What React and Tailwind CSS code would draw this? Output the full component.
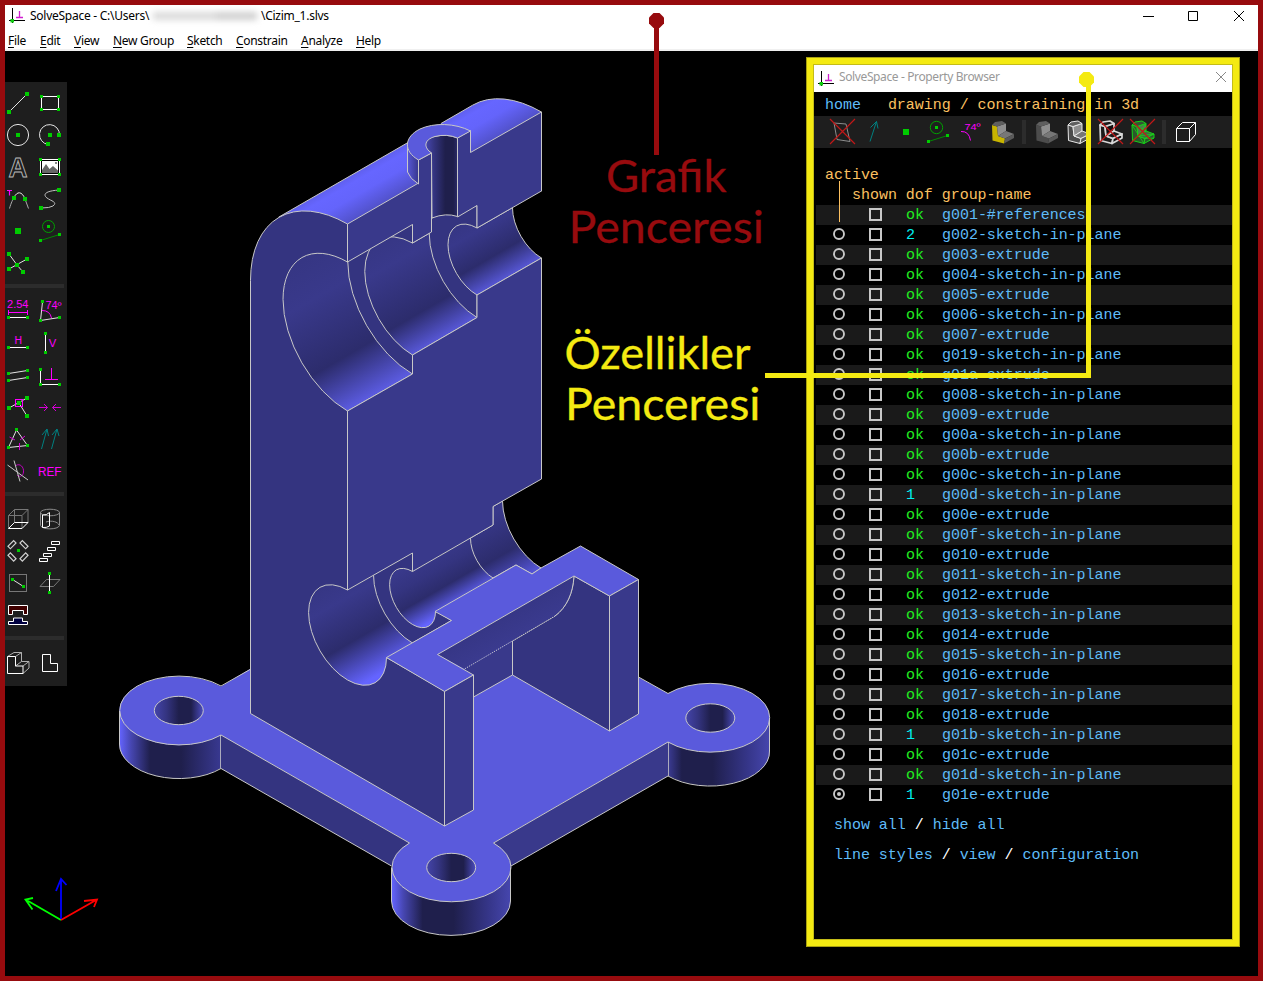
import React from "react";

const GREEN = "#00cc00";
const MAG = "#ff00ff";
const DIM = "#8c8c8c";

/* ---------- small drawing helpers ---------- */
function Dot({ x, y, s = 4 }) {
  return <rect x={Math.round(x - s / 2)} y={Math.round(y - s / 2)} width={s} height={s} fill={GREEN} stroke="none" />;
}
function Dots({ at, s = 3 }) {
  return at.map(([x, y]) => <Dot key={`${x}-${y}`} x={x} y={y} s={s} />);
}
function Icon({ children }) {
  return (
    <svg viewBox="0 0 32 32" className="block h-8 w-8" fill="none" stroke="#e4e4e4" strokeWidth="1">
      {children}
    </svg>
  );
}
function Label({ x, y, size, w, color = MAG, children }) {
  return (
    <text x={x} y={y} fontSize={size} fill={color} stroke="none" textLength={w} lengthAdjust="spacingAndGlyphs" fontFamily="'Liberation Sans', sans-serif">
      {children}
    </text>
  );
}

const sketchIcons = [
  <><path d="M7 25L25 7" /><Dots s={4} at={[[7, 25], [25, 7]]} /></>,
  <><path d="M7.500 9.500h17v13h-17z" stroke="#fff" /><Dots at={[[7.5, 9.5], [24.5, 9.5], [7.5, 22.5], [24.5, 22.5]]} /></>,
  <><circle cx="16" cy="16" r="10.600" /><Dot x={16} y={16} /></>,
  <><path d="M25.500 16A10 10 0 1 0 14 25.500" /><Dots s={4} at={[[16, 16], [25, 16], [14, 25]]} /></>,
  <text x="6.500" y="25.500" fontSize="27" fontWeight="bold" fontFamily="'Liberation Sans', sans-serif" stroke="#b8b8b8" strokeWidth=".9" textLength="19" lengthAdjust="spacingAndGlyphs">A</text>,
  <>
    <rect x="6.500" y="8.500" width="19" height="15" fill="#000" stroke="#fff" />
    <rect x="8" y="10" width="16" height="12" fill="#fff" stroke="none" />
    <path d="M8 22V19L12 13L15.500 18L19 15L24 19.500V22z" fill="#666" stroke="none" />
    <rect x="21" y="11" width="2" height="2" fill="#888" stroke="none" />
    <Dots at={[[6.5, 8.5], [25.5, 8.5], [6.5, 23.5], [25.5, 23.5]]} />
  </>,
  <><path d="M7.500 25.500C9 20 11 16 12 14.500" stroke="#aaa" /><path d="M12 14.500C15 8 20 8 23 16" /><path d="M23 16L26.500 25.500" stroke="#aaa" /><path d="M5 7.500h5M7.500 7.500v5" stroke={MAG} strokeWidth="1.200" /><Dots s={4} at={[[12, 15], [23, 16]]} /></>,
  <><path d="M25 7C10 8 9 12 13 15S24 19 19 23Q16 25 7 25" stroke="#c0c0c0" /><Dots s={4} at={[[25, 7], [7, 25]]} /></>,
  <Dot x={16} y={16} s={6} />,
  <><circle cx="14.500" cy="11.500" r="6" stroke="#00a000" /><path d="M6.500 25.500L25.500 19.500" stroke="#008800" /><Dots at={[[14.5, 11.5], [6.5, 25.5], [25.5, 19.5]]} /></>,
  <><path d="M7 7L15 18L21 25M7 22L25 12" /><Dots s={4} at={[[7, 7], [25, 12], [7, 22], [21, 25], [15, 18]]} /></>,
  null,
];

const constrainIcons = [
  <><Label x="5" y="12.800" size="10" w="21.500">2.54</Label><path d="M6.500 15v5M25.500 15v5M6.500 17.500h19" stroke={MAG} /><path d="M6 22.500h20" stroke="#fff" /><Dots at={[[6.5, 22.5], [25.5, 22.5]]} /></>,
  <><path d="M8.500 7L6.500 25.500L25.500 22.500" /><path d="M8 15.500Q16 15.500 17.500 23" stroke={MAG} /><Label x="11.500" y="13.800" size="10" w="16">74º</Label><Dots at={[[8.5, 6.5], [6.5, 25.5], [25.5, 22.5]]} /></>,
  <><Label x="12.500" y="16.500" size="10" w="7.500">H</Label><path d="M6 20.500h20" stroke="#fff" /><Dots at={[[6.5, 20.5], [25.5, 20.5]]} /></>,
  <><path d="M11.500 6v20" stroke="#fff" /><Label x="14.800" y="20" size="10.500" w="7.500">V</Label><Dots at={[[11.5, 6.5], [11.5, 25.5]]} /></>,
  <><path d="M6.500 14.500L25.500 11.500M6.500 21.500L25.500 18.500" /><Dots at={[[6.5, 14.5], [25.5, 11.5], [6.5, 21.5], [25.5, 18.5]]} /></>,
  <><path d="M6.500 10V25.500H25.500" stroke="#fff" /><path d="M17.500 9v11M11 20.500h13" stroke={MAG} /><Dots at={[[6.5, 10.5], [6.5, 25.5], [25.5, 25.5]]} /></>,
  <><path d="M7 17L25 7M17 12L25 25" /><Dots s={4} at={[[7, 17], [25, 7], [25, 25], [17, 12]]} /><rect x="13.500" y="8.500" width="7" height="7" stroke={MAG} /></>,
  <path d="M5 16.500h8.500M10 13l3.500 3.500L10 20M27 16.500h-8.500M22 13l-3.500 3.500L22 20" stroke="#d400d4" />,
  <><path d="M14.500 7L6.500 24.500L25.500 22.500z" /><path d="M7.500 14l5.500 3M23 13l-5 4M17.500 20v7" stroke="#d400d4" /><Dots at={[[14.5, 6.5], [6.5, 24.5], [25.5, 22.5]]} /></>,
  <path d="M7.500 26L13 6M8 12l5-6l1.500 7M17.500 26L23 6M18 12l5-6l2 7" stroke="#008080" />,
  <><path d="M14 10.500C18 8 22 12 21.500 17C21 22 17 22 15 20" stroke="#c000c0" /><path d="M5.500 10L26 25M12 5.500L18 26.500" stroke="#c8c8c8" /></>,
  <Label x="4" y="20.800" size="12.500" w="23.500">REF</Label>,
];

const groupIcons = [
  <><path d="M6.500 12.500h13.500v13M20 12.500l6-6v13M6.500 12.500v13M6.500 12.500l6-6h13.500M12.500 6.500v13" stroke="#777" /><path d="M6.500 25.500H20L26 19.500H12.500z" stroke="#fff" /></>,
  <><ellipse cx="16" cy="9.500" rx="9.500" ry="3.300" stroke={DIM} /><path d="M6.500 9.500v13C8 27 24 27 25.500 22.500V9.500M12 19c6-2 12 0 13 3" stroke={DIM} /><path d="M8.500 12q4 .5 7-2.500V23q-3 2-7 1.500z" stroke="#fff" /></>,
  <>{[[10, 9.7, -45], [22, 9.7, 45], [10, 22, 45], [22, 22, -45]].map(([x, y, r]) => <rect key={`${x}${y}`} x={x - 4} y={y - 1.7} width="8" height="3.400" transform={`rotate(${r} ${x} ${y})`} stroke="#d0d0d0" strokeWidth="1.200" />)}<Dot x={16.5} y={15.5} s={3} /></>,
  <path d="M17.500 6.500h8v3h-8zM13.500 12.500h8v3h-8zM9.500 18.500h8v3h-8zM5.500 23.500h8v3h-8z" stroke="#fff" />,
  <><rect x="7.500" y="7.500" width="17" height="17" stroke="#777" /><path d="M10.500 12.500L21.500 19.500" /><Dots at={[[10.5, 12.5], [21.5, 19.5]]} /></>,
  <><path d="M6 19.500L12.500 12.500H26L19.500 19.500z" stroke="#777" /><path d="M15.500 7v18" stroke="#fff" /><Dots at={[[15.5, 6.5], [15.5, 25.5]]} /></>,
  <><path d="M6.500 6.500h19v9h-4v-4h-11v4h-4z" fill="#400000" stroke="#fff" /><path d="M6.500 25.500v-3h5v-3.500h9v3.500h5v3z" fill="#000040" stroke="#fff" /></>,
  null,
];

const viewIcons = [
  <><path d="M13.500 9.500l6-4H12L5.500 9.500M19.500 5.500V14.500L13.500 19M19.500 14.500H27L21 19M27 14.500V21L21 26.500" stroke="#b0b0b0" /><path d="M5.500 9.500h8v9.500H21v7.500H5.500z" stroke="#fff" /></>,
  <path d="M8.500 7.500h8v9h7v8h-15z" stroke="#fff" />,
];

function IconGrid({ icons }) {
  return (
    <div className="-ml-[3px] grid w-16 grid-cols-2">
      {icons.map((ic, i) => <div key={i} className="h-8 w-8">{ic && <Icon>{ic}</Icon>}</div>)}
    </div>
  );
}
function Rule() {
  return <div className="mt-[5px] mb-[7px] h-1 w-[59px] bg-[#2c2c2c]" />;
}

function Toolbar() {
  return (
    <div className="absolute top-[31px] left-0 h-[604px] w-[62px] overflow-hidden bg-[#1e1e1e] pt-[5px]">
      <IconGrid icons={sketchIcons} />
      <Rule />
      <IconGrid icons={constrainIcons} />
      <Rule />
      <IconGrid icons={groupIcons} />
      <Rule />
      <IconGrid icons={viewIcons} />
    </div>
  );
}

/* ---------- the bracket ---------- */
const TOP = "#5a5adc";
const LEFT = "#343480";
const FRONT = "#39398b";

function bandGradient(id, from, to, stops) {
  return (
    <linearGradient id={id} gradientUnits="userSpaceOnUse" x1={from / 2} y1={from * 0.866} x2={to / 2} y2={to * 0.866}>
      {stops.map(([o, c]) => <stop key={o} offset={o} stopColor={c} />)}
    </linearGradient>
  );
}
function acrossGradient(id, x1, x2, stops) {
  return (
    <linearGradient id={id} gradientUnits="userSpaceOnUse" x1={x1} y1="0" x2={x2} y2="0">
      {stops.map(([o, c]) => <stop key={o} offset={o} stopColor={c} />)}
    </linearGradient>
  );
}

const lugs = [
  { id: "lugA", cx: 178.8, cy: 710.5 },
  { id: "lugB", cx: 710.3, cy: 718 },
  { id: "lugC", cx: 451.2, cy: 867.5 },
];

function LugSide({ id, cx, cy }) {
  return <path d={`M${cx - 59.5} ${cy}V${cy + 33.5}A59.500 34.400 0 0 0 ${cx + 59.5} ${cy + 33.5}V${cy}z`} fill={`url(#${id})`} />;
}

function Model() {
  return (
    <svg viewBox="5 51 1253 925" className="absolute inset-0 h-full w-full" fill="none" stroke="#c8c8c8" strokeWidth="1" strokeLinejoin="round">
      <defs>
        {bandGradient("roof", 326, 369, [[0, "#5e5eea"], [0.2, "#6666ff"], [0.5, "#6464fb"], [1, "#5050c6"]])}
        {bandGradient("boreL", 378, 530, [[0, "#363684"], [0.25, "#39398b"], [0.68, "#2c2c6c"], [1, "#5c5ce2"]])}
        {bandGradient("boreM", 395, 514, [[0, "#363684"], [0.25, "#39398b"], [0.72, "#2c2c6c"], [1, "#5858d8"]])}
        {bandGradient("boreS", 425, 495, [[0, "#363684"], [0.2, "#38388a"], [0.62, "#2c2c6c"], [1, "#5858d8"]])}
        {bandGradient("lowL", 669, 779, [[0, "#363684"], [0.2, "#39398b"], [0.57, "#2c2c6c"], [0.95, "#6464ff"]])}
        {bandGradient("lowS", 694, 754, [[0, "#39398b"], [0.3, "#343480"], [0.6, "#2c2c6c"], [1, "#6464ff"]])}
        {bandGradient("under", 752, 815, [[0, "#31317a"], [1, "#3b3b90"]])}
        {acrossGradient("pin", 426, 458, [[0, "#4646ae"], [0.25, "#343480"], [0.6, "#1f1f4c"], [0.85, "#1f1f4c"], [1, "#2c2c6c"]])}
        {acrossGradient("boss", 407, 419, [[0, "#5858d8"], [1, "#36368a"]])}
        {lugs.map(({ id, cx }) => (
          <React.Fragment key={id}>
            {acrossGradient(id, cx - 59.5, cx + 59.5, [[0, "#6464ff"], [0.1, "#4646b0"], [0.26, "#1f1f4c"], [0.52, "#1f1f4c"], [0.82, "#36368a"], [1, "#4646ae"]])}
            {acrossGradient(`${id}h`, cx - 24.5, cx + 24.5, [[0, "#4444aa"], [0.25, "#343480"], [0.5, "#1f1f4c"], [0.75, "#1f1f4c"], [1, "#4c4cc0"]])}
          </React.Fragment>
        ))}
      </defs>

      {/* base plate sides */}
      <g stroke="none">
        {lugs.map((l) => <LugSide key={l.id} {...l} />)}
        <path d="M221 735V768.500L391.500 866H420L409.500 843z" fill={LEFT} />
        <path d="M668 742V776L511 866H483L493.500 843z" fill={FRONT} />
      </g>
      {/* base plate top */}
      <path d="M221 686.500A59.500 34.400 0 1 0 221 735L409.500 843A59.500 34.400 0 1 0 493.500 843L668 742A59.500 34.400 0 1 0 668 693.500L638 677L512 640L250 669z" fill={TOP} stroke="none" />
      <path d="M250 669.500L221 686A59.500 34.400 0 1 0 221 735L409.500 843A59.500 34.400 0 1 0 493.500 843L668 742A59.500 34.400 0 1 0 668 693.500L638.500 677" />
      <path d="M119.500 711V744A59.500 34.400 0 0 0 221 768.500L391.500 866M391.500 867.500V901A59.500 34.400 0 0 0 510.500 901V867.500M511 866L668 776A59.500 34.400 0 0 0 769.500 751V718" />
      <path d="M220.500 735V768.500M668.500 742V776" strokeOpacity=".8" />
      {lugs.map(({ id, cx, cy }) => <ellipse key={id} cx={cx} cy={cy} rx="24.500" ry="14.200" fill={`url(#${id}h)`} />)}

      {/* roof of the large bearing */}
      <path d="M278.600 217.200L472.600 105.200A137.800 79.500 60 0 1 541.500 112L541.500 200L347.500 260z" fill="url(#roof)" stroke="none" />
      <path d="M278.600 217.200L408 142.500M441 123.500L472.600 105.200A137.800 79.500 60 0 1 541.500 112" />

      {/* left wall */}
      <path d="M250.500 713.500V280.300A137.800 79.500 60 0 1 347.500 224V590L386.500 657.500L444.500 691V826z" fill={LEFT} />

      {/* upper bores */}
      <path d="M347.500 262A91.200 52.700 60 0 0 347.500 411L412.500 374V224.500z" fill="url(#boreL)" />
      <path d="M412.500 224.500A91.200 52.700 60 0 0 412.500 374z" fill={LEFT} />
      <path d="M412.500 243A68.600 39.600 60 0 0 412.500 355L477 317.500V205.500z" fill="url(#boreM)" />
      <path d="M477 205.500A68.600 39.600 60 0 0 477 317.500z" fill={LEFT} />
      <path d="M477 228A41 23.700 60 0 0 477 295L541.500 258V191z" fill="url(#boreS)" />
      <path d="M541.500 191A41 23.700 60 0 0 541.500 258H543V191z" fill="#000" stroke="none" />
      <path d="M541.500 191A41 23.700 60 0 0 541.500 258" />

      {/* section faces, upper part */}
      <path d="M347.500 224L418.500 183V160L431.500 153V232L412.500 243V224.500L347.500 262z" fill={FRONT} />
      <path d="M457.500 217V138L470.500 130.500V152.500L541.500 112V191L477 228V205.500z" fill={FRONT} />
      {/* boss */}
      <path d="M407.500 143V172Q410 179 418.500 184V160z" fill="url(#boss)" />
      <path d="M431.500 153C422 147 424 139 434 136.500Q447 133.500 457.500 138V216.500Q446 212.500 432 218z" fill="url(#pin)" />
      <path d="M418.500 160C403 151 404 137 420 129C434 122.500 455 123 470.500 131L457.500 138Q447 133.500 435 136.500C423 140 424 148 431.500 153z" fill={TOP} />

      {/* lower bores */}
      <path d="M493 506L502.500 501C504 530 520 558 541.500 568L532 574L516 565L440 612L460 545z" fill="url(#lowL)" stroke="none" />
      <path d="M347.500 590A55.100 31.800 60 1 0 386.500 657.500L425 636L412.500 553z" fill="url(#lowL)" stroke="none" />
      <path d="M347.500 590A55.100 31.800 60 1 0 386.500 657.500" />
      <path d="M412.500 553A55.100 31.800 60 0 0 412.500 643L451.500 620.500L435.500 611z" fill={LEFT} />
      <path d="M412.500 571.500A32.500 18.700 60 1 0 435.500 611.300L493 577.500V525z" fill="url(#lowS)" stroke="none" />
      <path d="M412.500 571.500A32.500 18.700 60 1 0 435.500 611.300" />
      <path d="M470.500 538A32.500 18.700 60 0 0 493 578L516 565L532 574L541 568A55.100 31.800 60 0 1 502.500 501L493 506.500V525z" fill="url(#lowL)" />

      {/* main section face */}
      <path d="M347.500 411L412.500 374V355L477 317.500V295L541.500 258V479L493 506.500V525L412.500 571.500V553L347.500 590z" fill={FRONT} />

      {/* space under the flange */}
      <path d="M464.500 669L512.500 641V675L473.500 697z" fill={FRONT} stroke="none" />
      <path d="M512.500 675L473.500 697" />
      <path d="M574 576L609.500 596V731L512.500 675V641L555 616C567 607 573 593 574 576z" fill={LEFT} />
      <path d="M437.500 654.500L574 576C573 593 567 607 555 616L464.500 669z" fill="url(#under)" stroke="none" />
      <path d="M574 576C573 593 567 607 555 616" />
      <path d="M555 616L464.500 669" strokeDasharray="1.200 1.200" />

      {/* flange */}
      <path d="M386.500 657.500L444.500 691.500L473.500 675L437.500 654.500L574 576L609.500 596L638.500 579.500L580.500 546L541 568L532 574L516 565L435 611.500L451.500 620.500z" fill={TOP} />
      <path d="M444.500 691.500L473.500 675V810L444.500 826z" fill={FRONT} />
      <path d="M609.500 596L638.500 579.500V714L609.500 731z" fill={FRONT} />

      {/* axes */}
      <g strokeWidth="1.800" strokeLinejoin="miter">
        <path d="M61 920L25.500 899.500M33 898L25.500 899.500L32.500 909.500" stroke="#00ff00" />
        <path d="M61 920L97 899.500M84 901L97 899.500L94 907" stroke="#ff0000" />
        <path d="M61 919V879M56 891L61 879L66.500 885" stroke="#0000ff" />
      </g>
    </svg>
  );
}

/* ---------- property browser ---------- */
function SolidL({ edge = "none", tone = ["#4c4c4c", "#8f8f8f", "#5f5f5f", "#777", "#5a5a5a"], w = 1 }) {
  return (
    <g stroke={edge} strokeWidth={w} strokeLinejoin="round">
      <path d="M6 9L11 10.500L12 20L19 22.500L18 27.500L6.500 24.500z" fill={tone[0]} />
      <path d="M11 10.500L20 7.500V15L12 20z" fill={tone[1]} />
      <path d="M6 9L9 6L16 5L20 7.500L11 10.500z" fill={tone[2]} />
      <path d="M12 20L20 15L28 18L19 22.500z" fill={tone[3]} />
      <path d="M19 22.500L28 18V22L18 27.500z" fill={tone[4]} />
    </g>
  );
}
const Cross = () => <path d="M4 3L29 28M29 3L4 28" stroke="#c01818" strokeWidth="1.200" />;

const showIcons = [
  <><path d="M8 7L20 8L24 25.500L11 23.500z" stroke={DIM} /><Cross /></>,
  <path d="M12 25.500L18.500 5.500M12.500 11.500l6-6l1.500 7" stroke="#008080" />,
  <Dot x={16} y={16} s={6} />,
  <><circle cx="14.500" cy="11.500" r="6.200" stroke="#00a000" /><path d="M6.500 25.500L25.500 19.500" stroke="#008800" /><Dots at={[[14.5, 11.5], [6.5, 25.5], [25.5, 19.5]]} /></>,
  <><Label x="10.500" y="14" size="9.500" w="16">74º</Label><path d="M7 15.500Q15 15 16.500 24.500" stroke={MAG} /></>,
  <SolidL tone={["#c8b400", "#8f8f8f", "#5f5f5f", "#777", "#5a5a5a"]} />,
];
const shadeIcons = [
  <SolidL />,
  <SolidL edge="#e8e8e8" />,
  <><SolidL edge="#d8d8d8" w={1.7} tone={["#1c1c1c", "#111", "#1c1c1c", "#1c1c1c", "#111"]} /><Cross /></>,
  <><SolidL edge="#18d018" tone={["#2a5a2a", "#4c7c4c", "#335533", "#3f6f3f", "#2a5a2a"]} /><path d="M6 9L18 27.500M12 20L6.500 24.500M11 10.500L20 15M12 20L28 18M19 22.500L28 22M12 20L20 7.500" stroke="#18d018" strokeWidth=".8" /><Cross /></>,
];

const groups = [
  ["ok", "g001-#references"], ["2", "g002-sketch-in-plane"], ["ok", "g003-extrude"], ["ok", "g004-sketch-in-plane"],
  ["ok", "g005-extrude"], ["ok", "g006-sketch-in-plane"], ["ok", "g007-extrude"], ["ok", "g019-sketch-in-plane"],
  ["ok", "g01a-extrude"], ["ok", "g008-sketch-in-plane"], ["ok", "g009-extrude"], ["ok", "g00a-sketch-in-plane"],
  ["ok", "g00b-extrude"], ["ok", "g00c-sketch-in-plane"], ["1", "g00d-sketch-in-plane"], ["ok", "g00e-extrude"],
  ["ok", "g00f-sketch-in-plane"], ["ok", "g010-extrude"], ["ok", "g011-sketch-in-plane"], ["ok", "g012-extrude"],
  ["ok", "g013-sketch-in-plane"], ["ok", "g014-extrude"], ["ok", "g015-sketch-in-plane"], ["ok", "g016-extrude"],
  ["ok", "g017-sketch-in-plane"], ["ok", "g018-extrude"], ["1", "g01b-sketch-in-plane"], ["ok", "g01c-extrude"],
  ["ok", "g01d-sketch-in-plane"], ["1", "g01e-extrude"],
];

function AppMark() {
  return (
    <svg viewBox="0 0 18 18" className="block h-[18px] w-[18px] shrink-0" fill="none">
      <path d="M4.500 1v15M1 13.500h16" stroke="#000" />
      <path d="M11.500 4v6.500M8 10.500h7" stroke="#d020d0" strokeWidth="1.300" />
      <rect x="2.500" y="12" width="3.500" height="3.500" fill="#10d010" />
    </svg>
  );
}

function GroupRow({ dof, name, index, last }) {
  return (
    <div className={`ml-[2px] flex h-5 items-center ${index % 2 === 0 ? "bg-[#1a1a1a]" : ""}`}>
      <div className="flex w-[53px] items-center pl-[17px]">
        {index > 0 && (
          <svg viewBox="0 0 12 12" className="-mt-[2px] block h-3 w-3" fill="none" stroke="#c8c8c8" strokeWidth="1.900">
            <circle cx="6" cy="6" r="5" />
            {last && <circle cx="6" cy="6" r="2" fill="#c8c8c8" stroke="none" />}
          </svg>
        )}
      </div>
      <div className="-mt-[1px] h-[13px] w-[13px] border-2 border-[#c8c8c8]" />
      <div className={`mt-[2px] ml-6 w-9 ${dof === "ok" ? "text-[#20f020]" : "text-[#00f0f0]"}`}>{dof}</div>
      <div className="mt-[2px] text-[#5fbcf8]">{name}</div>
    </div>
  );
}

function PropertyBrowser() {
  return (
    <div className="absolute top-[6px] left-[801px] flex h-[890px] w-[434px] border border-[#a8a010]">
      <div className="flex flex-1 border-[6px] border-[#f4ea12]">
        <div className="flex w-[420px] flex-col border border-[#c4bc18] bg-black">
          <div className="flex h-[27px] items-center bg-white pr-[5px] pl-[3px] font-['Noto_Sans','Open_Sans',sans-serif] text-[12px] text-[#999]">
            <AppMark />
            <span className="-mt-[3px] ml-[4px] tracking-[-0.38px]">SolveSpace - Property Browser</span>
            <svg viewBox="0 0 12 12" className="-mt-[4px] ml-auto block h-3 w-3" stroke="#888"><path d="M1 1l10 10M11 1L1 11" /></svg>
          </div>
          <div className="flex flex-1 flex-col whitespace-pre font-['Liberation_Mono',monospace] text-[15px] leading-5 tracking-[-0.03px] text-[#fcc060]">
            <div className="flex h-6 items-center pt-[3px] pl-[11px]"><span className="text-[#5fbcf8]">home</span><span className="ml-[27px]">drawing / constraining in 3d</span></div>
            <div className="flex h-8 bg-[#1e1e1e] pl-3">
              {showIcons.map((ic, i) => <Icon key={i}>{ic}</Icon>)}
              <div className="mx-[4px] my-1 w-1 bg-[#2c2c2c]" />
              {shadeIcons.map((ic, i) => <Icon key={i}>{ic}</Icon>)}
              <div className="mx-[4px] my-1 w-1 bg-[#2c2c2c]" />
              <Icon><path d="M6.500 12.500h13v13h-13zM6.500 12.500l6-6h13v12l-6 7M19.500 12.500l6-6" stroke="#fff" /></Icon>
            </div>
            <div className="mt-[17px] h-5 pt-px pl-[11px]">active</div>
            <div className="flex h-5 pt-px pl-[38px]">shown dof group-name</div>
            {groups.map(([dof, name], i) => <GroupRow key={name} dof={dof} name={name} index={i} last={i === groups.length - 1} />)}
            <div className="mt-[11px] pl-5 text-[#5fbcf8]">show all <span className="text-white">/</span> hide all</div>
            <div className="mt-[10px] pl-5 text-[#5fbcf8]">line styles <span className="text-white">/</span> view <span className="text-white">/</span> configuration</div>
          </div>
        </div>
      </div>
    </div>
  );
}

/* ---------- callouts drawn above both windows ---------- */
function Callout({ x, y, w, children }) {
  return <text x={x} y={y} textLength={w} lengthAdjust="spacingAndGlyphs">{children}</text>;
}
function Callouts() {
  return (
    <svg viewBox="0 0 1263 981" className="pointer-events-none absolute inset-0 h-full w-full" fontFamily="Lato, sans-serif" fontSize="45">
      <g fill="#970b0e">
        <path d="M653.500 13h6l4.500 4.500v6l-4.500 4.500h-6l-4.500-4.500v-6z" />
        <path d="M654 20h5v135h-5z" />
        <g stroke="#970b0e" strokeWidth=".3">
          <Callout x="606" y="192" w="120.500">Grafik</Callout>
          <Callout x="568.500" y="243" w="195.500">Penceresi</Callout>
        </g>
      </g>
      <g fill="#f4ea12">
        <path d="M1083.500 72h6l4.500 4.500v6l-4.500 4.500h-6l-4.500-4.500v-6z" />
        <path d="M1086 80h5v298H765v-5h321z" />
        <path d="M839 181h1v41h-1z" fill="#fcc060" />
        <g stroke="#f4ea12" strokeWidth=".3">
          <Callout x="564.500" y="369" w="186">Özellikler</Callout>
          <Callout x="565" y="420" w="195.500">Penceresi</Callout>
        </g>
      </g>
    </svg>
  );
}

const menu = [
  ["F", "ile", "w-[18px]"], ["E", "dit", "w-5"], ["V", "iew", "w-[25px]"], ["N", "ew Group", "w-[60px]"],
  ["S", "ketch", "w-[35px]"], ["C", "onstrain", "w-[51px]"], ["A", "nalyze", "w-[41px]"], ["H", "elp", "w-[25px]"],
];

export default function App() {
  return (
    <div className="relative flex h-[981px] w-[1263px] flex-col overflow-hidden border-[5px] border-[#970b0e] bg-black">
      <header className="h-[46px] shrink-0 border-b-2 border-[#f0f0f0] bg-white font-['Noto_Sans','Open_Sans',sans-serif] text-[12px] text-black">
        <div className="flex h-[22px] items-center pr-[13px] pl-[3px]">
          <AppMark />
          <span className="ml-1 w-[119px] whitespace-nowrap tracking-[-0.26px]">SolveSpace - C:\Users\</span>
          <div className="flex h-3 w-[112px] items-center px-1 blur-[3px]">
            <div className="h-2 w-[64px] bg-[#dadada]" />
            <div className="h-2 w-[42px] bg-[#cfcfcf]" />
          </div>
          <span className="tracking-[-0.26px]">\Cizim_1.slvs</span>
          <svg viewBox="0 0 102 12" className="-mt-px ml-auto block h-3 w-[102px]" fill="none" stroke="#000">
            <path d="M0 6.500h11M45.500 1.500h9v9h-9zM91 1l10 10M101 1L91 11" />
          </svg>
        </div>
        <nav className="flex h-[22px] items-center gap-[14px] pt-[6px] pl-[3px] leading-4 whitespace-nowrap tracking-[-0.3px]">
          {menu.map(([k, rest, w]) => (
            <span key={rest} className={w}><span className="underline underline-offset-2">{k}</span>{rest}</span>
          ))}
        </nav>
      </header>
      <main className="relative flex-1">
        <Model />
        <Toolbar />
        <PropertyBrowser />
      </main>
      <div className="absolute -top-[5px] -left-[5px] h-[981px] w-[1263px]"><Callouts /></div>
    </div>
  );
}
